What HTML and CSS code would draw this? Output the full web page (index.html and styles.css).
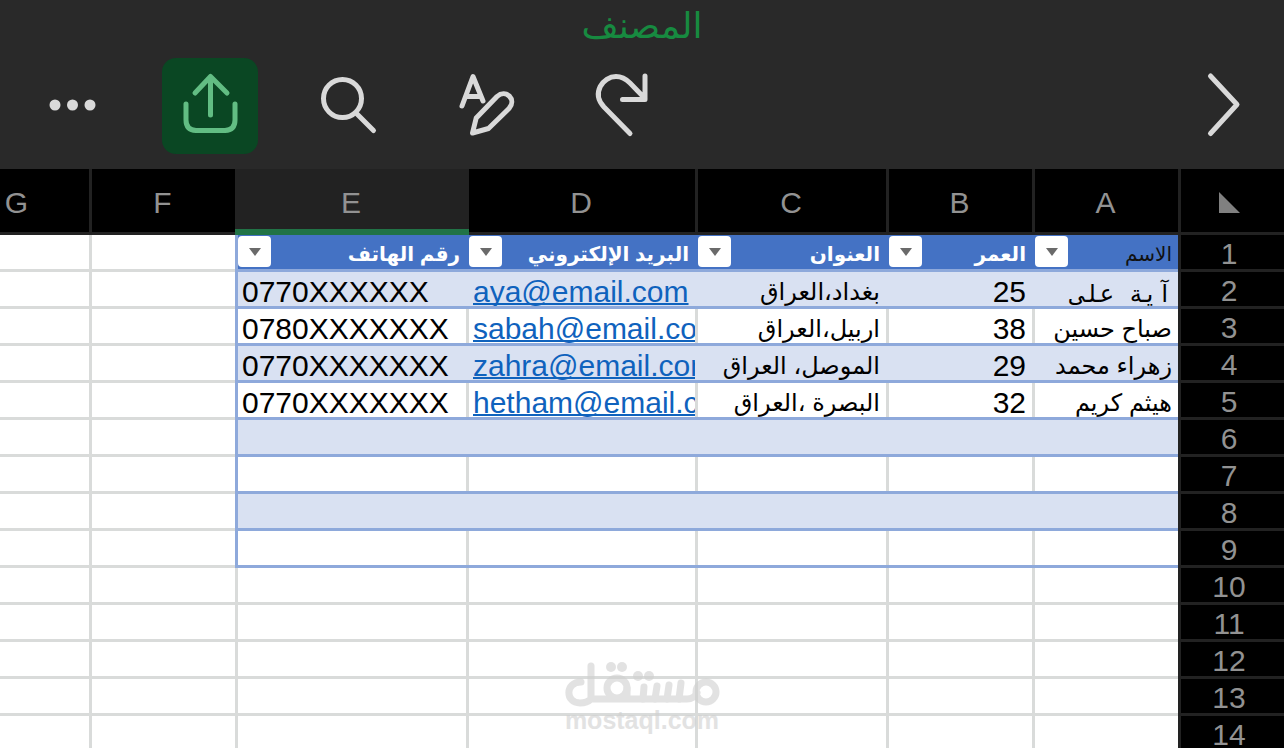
FILE: index.html
```html
<!DOCTYPE html>
<html lang="ar">
<head>
<meta charset="utf-8">
<title>المصنف</title>
<link rel="stylesheet" href="styles.css">
</head>
<body>
<div class="app">
  <header class="topbar">
    <h1 class="title" dir="rtl">المصنف</h1>
    <nav class="tools">
      <button class="tool" aria-label="المزيد"><svg viewBox="0 0 96 96"><g fill="#d9d9d9"><circle cx="31" cy="47" r="5.5"/><circle cx="48.5" cy="47" r="5.5"/><circle cx="66" cy="47" r="5.5"/></g></svg></button>
      <button class="tool tool-share" aria-label="مشاركة"><svg viewBox="0 0 96 96"><path d="M48.5 57V18.500M33 35 48.5 18.500 65 35M24 46V62q0 10 10 10.500H63q10-.5 10-10.500V46"/></svg></button>
      <button class="tool" aria-label="بحث"><svg viewBox="0 0 96 96"><circle cx="42.500" cy="40.500" r="19"/><path d="M57 56 73.500 72.500"/></svg></button>
      <button class="tool" aria-label="تنسيق"><svg viewBox="0 0 96 96"><path d="M24 48 35 18.500 45 43M29 38.500H43"/><path d="M34.500 75 38.200 60 59 38.500c9-8 20 3 12 12L50.500 70.500Z"/></svg></button>
      <button class="tool" aria-label="إعادة"><svg viewBox="0 0 96 96"><path d="M54 75.500 28 49C15 35 27 18.500 40 18.500c6 0 10 2.500 14 6.500L69 40.500M69 18V41.500H46.500"/></svg></button>
      <button class="tool tool-next" aria-label="التالي"><svg viewBox="0 0 96 96"><path d="M34.500 18 61 46.500 34.500 75.500"/></svg></button>
    </nav>
  </header>
  <main class="sheet" dir="rtl">
    <table class="grid">
      <colgroup><col class="w-head"><col class="w-a"><col class="w-std"><col class="w-c"><col class="w-d"><col class="w-e"><col class="w-std"><col></colgroup>
      <thead>
        <tr><th class="corner"><svg viewBox="0 0 21 21"><path d="M0 0V21H21Z"/></svg></th><th scope="col" class="first">A</th><th scope="col">B</th><th scope="col">C</th><th scope="col">D</th><th scope="col" class="selected">E</th><th scope="col">F</th><th scope="col">G</th></tr>
      </thead>
      <tbody>
        <tr class="fields"><th scope="row">1</th>
          <td><div class="field"><span class="plain">الاسم</span><button class="filter" aria-label="تصفية الاسم"></button></div></td>
          <td><div class="field"><span>العمر</span><button class="filter" aria-label="تصفية العمر"></button></div></td>
          <td><div class="field"><span>العنوان</span><button class="filter" aria-label="تصفية العنوان"></button></div></td>
          <td><div class="field"><span>البريد الإلكتروني</span><button class="filter" aria-label="تصفية البريد"></button></div></td>
          <td><div class="field"><span>رقم الهاتف</span><button class="filter" aria-label="تصفية الهاتف"></button></div></td>
          <td class="edge"></td><td></td></tr>
        <tr class="band"><th scope="row">2</th><td><div class="cell mono">آية علي</div></td><td><div class="cell">25</div></td><td><div class="cell arabic">بغداد،العراق</div></td><td><div class="cell ltr"><a href="mailto:aya@email.com">aya@email.com</a></div></td><td><div class="cell ltr">0770XXXXXX</div></td><td class="edge"></td><td></td></tr>
        <tr class="data"><th scope="row">3</th><td><div class="cell arabic">صباح حسين</div></td><td><div class="cell">38</div></td><td><div class="cell arabic">اربيل،العراق</div></td><td><div class="cell ltr"><a href="mailto:sabah@email.com">sabah@email.com</a></div></td><td><div class="cell ltr">0780XXXXXXX</div></td><td class="edge"></td><td></td></tr>
        <tr class="band"><th scope="row">4</th><td><div class="cell arabic">زهراء محمد</div></td><td><div class="cell">29</div></td><td><div class="cell arabic">الموصل، العراق</div></td><td><div class="cell ltr"><a href="mailto:zahra@email.com">zahra@email.com</a></div></td><td><div class="cell ltr">0770XXXXXXX</div></td><td class="edge"></td><td></td></tr>
        <tr class="data"><th scope="row">5</th><td><div class="cell arabic">هيثم كريم</div></td><td><div class="cell">32</div></td><td><div class="cell arabic">البصرة ،العراق</div></td><td><div class="cell ltr"><a href="mailto:hetham@email.com">hetham@email.com</a></div></td><td><div class="cell ltr">0770XXXXXXX</div></td><td class="edge"></td><td></td></tr>
        <tr class="band"><th scope="row">6</th><td></td><td></td><td></td><td></td><td></td><td class="edge"></td><td></td></tr>
        <tr class="data"><th scope="row">7</th><td></td><td></td><td></td><td></td><td></td><td class="edge"></td><td></td></tr>
        <tr class="band"><th scope="row">8</th><td></td><td></td><td></td><td></td><td></td><td class="edge"></td><td></td></tr>
        <tr class="data"><th scope="row">9</th><td></td><td></td><td></td><td></td><td></td><td class="edge"></td><td></td></tr>
        <tr><th scope="row">10</th><td></td><td></td><td></td><td></td><td></td><td></td><td></td></tr>
        <tr><th scope="row">11</th><td></td><td></td><td></td><td></td><td></td><td></td><td></td></tr>
        <tr><th scope="row">12</th><td></td><td></td><td></td><td></td><td></td><td></td><td></td></tr>
        <tr><th scope="row">13</th><td></td><td></td><td></td><td></td><td></td><td></td><td></td></tr>
        <tr><th scope="row">14</th><td></td><td></td><td></td><td></td><td></td><td></td><td></td></tr>
      </tbody>
    </table>
    <div class="watermark" dir="ltr">
      <svg viewBox="0 0 154 46" role="img" aria-label="مستقل">
        <path d="M16 20C0 20 0 41 15 41c5 0 8-1 11-4M26 4V37H122q7 0 10-6M62 26V37"/>
        <circle cx="52" cy="26" r="10"/><circle cx="141" cy="30" r="10"/>
        <path d="M79 25 78 37M92 24 90 37M104 23 102 37M116 21 114 37"/>
        <g class="dots"><circle cx="46" cy="5" r="5"/><circle cx="57" cy="5" r="5"/><circle cx="73" cy="14" r="5"/><circle cx="84" cy="14" r="5"/></g>
      </svg>
      <span>mostaql.com</span>
    </div>
  </main>
</div>
</body>
</html>
```
FILE: styles.css
```css
* { box-sizing: border-box; }
body { margin: 0; background: #fff; font-family: "Liberation Sans", "DejaVu Sans", sans-serif; }
.app { display: flex; flex-direction: column; height: 100vh; overflow: hidden; }

.topbar { background: #292929; padding-bottom: 15px; }
.title { margin: 0; height: 58px; line-height: 52px; text-align: center; color: #178a40; font-size: 36px; font-weight: 400; }
.tools { display: flex; gap: 42px; padding: 0 12px 0 24px; }
.tool { width: 96px; height: 96px; padding: 0; border: 0; border-radius: 14px; background: none; }
.tool svg { display: block; width: 96px; height: 96px; fill: none; stroke: #d9d9d9; stroke-width: 5; stroke-linecap: round; stroke-linejoin: round; }
.tool svg g { stroke: none; }
.tool-share { background: #0a4723; }
.tool-share svg { stroke: #62bd83; }
.tool-next { margin-left: auto; }

.sheet { position: relative; flex: 1; overflow: hidden; }
.grid { width: 100%; min-width: 1338px; table-layout: fixed; border-collapse: separate; border-spacing: 0; }
.w-head { width: 106px; }
.w-a { width: 143px; }
.w-std { width: 146px; }
.w-c { width: 191px; }
.w-d { width: 229px; }
.w-e { width: 231px; }

th { padding: 0; background: #000; color: #929292; font-size: 30px; font-weight: 400; line-height: 34px; border-bottom: 3px solid #222; }
thead th { height: 66px; padding: 4px 2px 0 0; border-right: 3px solid #222; }
thead .first { border-right: 0; }
thead .corner, tbody th { padding-right: 7px; border-left: 3px solid #222; border-right: 0; }
.corner svg { display: block; width: 21px; height: 21px; margin: 0 auto; fill: #808080; }
thead .selected { position: relative; background: #222; }
.selected::after { content: ""; position: absolute; left: -3px; right: -3px; bottom: -3px; height: 6px; background: #217346; }
tbody th { height: 37px; padding-top: 4px; line-height: 30px; }

/* Column lines are inset shadows so they stop above each row line. */
td { height: 37px; padding: 0 3px 0 0; background: #fff; border-bottom: 3px solid #d9dbda; box-shadow: inset -3px 0 #d9dbda; vertical-align: top; }
tr:not(.fields, .band, .data) td:not(:nth-child(2)) { padding: 0; border-right: 3px solid #d9dbda; box-shadow: none; }
tbody th + td { padding-right: 0; box-shadow: none; }
.fields td:not(.edge, :last-child) { background: #4472c4; border-bottom-color: #8ea9db; box-shadow: none; }
.band td:not(.edge, :last-child) { background: #d9e1f2; border-bottom-color: #8ea9db; box-shadow: none; }
.data td:not(.edge, :last-child) { border-bottom-color: #8ea9db; }
tr[class] td:last-child { padding: 0; border-right: 3px solid #d9dbda; box-shadow: none; }
td.edge { padding: 0; border-bottom: 0; border-right: 3px solid #8ea9db; box-shadow: inset 0 -3px #d9dbda; }

.cell { height: 34px; padding: 0 6px; overflow: hidden; line-height: 40px; font-size: 30px; white-space: nowrap; text-align: right; }
.cell.arabic { font-size: 24px; }
.cell.mono { font-family: "DejaVu Sans Mono", monospace; font-size: 24px; line-height: 44px; }
.cell.ltr { direction: ltr; text-align: left; padding: 0 0 0 4px; }
.cell a { color: #0f62bd; text-decoration: underline; text-decoration-thickness: 2px; text-underline-offset: 1px; text-decoration-skip-ink: none; }

.field { display: flex; justify-content: space-between; align-items: flex-start; height: 34px; padding-right: 6px; color: #fff; font-size: 20px; font-weight: 700; line-height: 38px; white-space: nowrap; }
.plain { color: #111; font-weight: 400; }
.filter { flex: none; width: 33px; height: 31px; margin-top: 1px; padding: 0; border: 0; border-radius: 4px; background: #fff; }
.filter::before { content: ""; display: block; width: 0; margin: 0 auto; border: 6px solid transparent; border-top: 8px solid #6a6a6a; border-bottom: 0; }

.watermark { position: absolute; left: 50%; bottom: 16px; display: flex; flex-direction: column; align-items: center; width: 156px; margin-left: -78px; color: #d0d0d0; opacity: 0.6; font-size: 25px; font-weight: 700; line-height: 24px; }
.watermark svg { width: 154px; height: 46px; overflow: visible; fill: none; stroke: currentColor; stroke-width: 7; stroke-linecap: round; }
.watermark .dots { fill: currentColor; stroke: none; }
```
